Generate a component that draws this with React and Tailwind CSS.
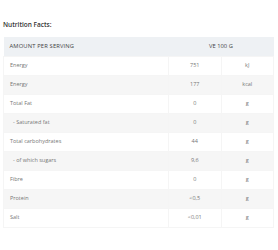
const rows = [
  ["Energy", "751", "kJ"],
  ["Energy", "177", "kcal"],
  ["Total Fat", "0", "g"],
  ["- Saturated fat", "0", "g"],
  ["Total carbohydrates", "44", "g"],
  ["- of which sugars", "9,6", "g"],
  ["Fibre", "0", "g"],
  ["Protein", "<0,5", "g"],
  ["Salt", "<0,01", "g"],
];

const App = () => {
  return (
    <main
      className="h-[250px] w-[278px] bg-white px-[3px] pt-[19px]"
      style={{ fontFamily: "'Open Sans', sans-serif" }}
    >
      <h3 className="h-[11px] text-[6.5px] font-semibold leading-[11px] text-[#333]">
        Nutrition Facts:
      </h3>

      <table className="mt-[7px] w-[271px] table-fixed border-collapse text-[5.5px] text-[#777]">
        <thead>
          <tr className="h-[19px] bg-[#eef1f4]">
            <th className="w-[165px] pl-[6px] text-left text-[5.8px] font-normal tracking-wide text-[#444]">
              AMOUNT PER SERVING
            </th>
            <th
              colSpan={2}
              className="text-center text-[5.8px] font-medium text-[#444]"
            >
              VE 100 G
            </th>
          </tr>
        </thead>
        <tbody>
          {rows.map(([label, value, unit], i) => (
            <tr
              key={i}
              className={`h-[19px] border border-[#f5f5f5] ${
                i % 2 === 1 ? "bg-[#f6f6f6]" : "bg-white"
              }`}
            >
              <td
                className={`w-[165px] border-r border-[#f5f5f5] ${
                  label.startsWith("-") ? "pl-[9px]" : "pl-[6px]"
                }`}
              >
                {label}
              </td>
              <td className="w-[59px] border-r border-[#f5f5f5] text-center">
                {value}
              </td>
              <td className="w-[47px] text-center">{unit}</td>
            </tr>
          ))}
        </tbody>
      </table>
    </main>
  );
};

export default App;
